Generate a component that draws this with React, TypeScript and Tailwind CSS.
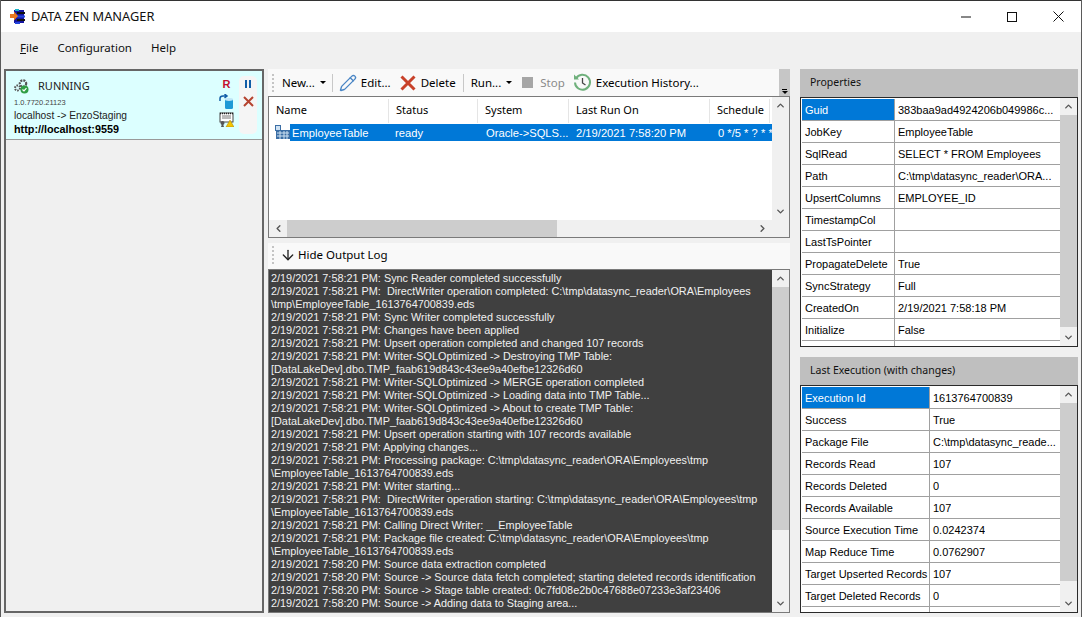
import { ArrowDown, ChevronDown, ChevronLeft, ChevronRight, ChevronUp, Pencil } from 'lucide-react';

const logLines = [
  '2/19/2021 7:58:21 PM: Sync Reader completed successfully',
  '2/19/2021 7:58:21 PM:  DirectWriter operation completed: C:\\tmp\\datasync_reader\\ORA\\Employees',
  '\\tmp\\EmployeeTable_1613764700839.eds',
  '2/19/2021 7:58:21 PM: Sync Writer completed successfully',
  '2/19/2021 7:58:21 PM: Changes have been applied',
  '2/19/2021 7:58:21 PM: Upsert operation completed and changed 107 records',
  '2/19/2021 7:58:21 PM: Writer-SQLOptimized -> Destroying TMP Table:',
  '[DataLakeDev].dbo.TMP_faab619d843c43ee9a40efbe12326d60',
  '2/19/2021 7:58:21 PM: Writer-SQLOptimized -> MERGE operation completed',
  '2/19/2021 7:58:21 PM: Writer-SQLOptimized -> Loading data into TMP Table...',
  '2/19/2021 7:58:21 PM: Writer-SQLOptimized -> About to create TMP Table:',
  '[DataLakeDev].dbo.TMP_faab619d843c43ee9a40efbe12326d60',
  '2/19/2021 7:58:21 PM: Upsert operation starting with 107 records available',
  '2/19/2021 7:58:21 PM: Applying changes...',
  '2/19/2021 7:58:21 PM: Processing package: C:\\tmp\\datasync_reader\\ORA\\Employees\\tmp',
  '\\EmployeeTable_1613764700839.eds',
  '2/19/2021 7:58:21 PM: Writer starting...',
  '2/19/2021 7:58:21 PM:  DirectWriter operation starting: C:\\tmp\\datasync_reader\\ORA\\Employees\\tmp',
  '\\EmployeeTable_1613764700839.eds',
  '2/19/2021 7:58:21 PM: Calling Direct Writer: __EmployeeTable',
  '2/19/2021 7:58:21 PM: Package file created: C:\\tmp\\datasync_reader\\ORA\\Employees\\tmp',
  '\\EmployeeTable_1613764700839.eds',
  '2/19/2021 7:58:20 PM: Source data extraction completed',
  '2/19/2021 7:58:20 PM: Source -> Source data fetch completed; starting deleted records identification',
  '2/19/2021 7:58:20 PM: Source -> Stage table created: 0c7fd08e2b0c47688e07233e3af23406',
  '2/19/2021 7:58:20 PM: Source -> Adding data to Staging area...',
];

const properties: [string, string][] = [
  ['Guid', '383baa9ad4924206b049986c...'],
  ['JobKey', 'EmployeeTable'],
  ['SqlRead', 'SELECT * FROM Employees'],
  ['Path', 'C:\\tmp\\datasync_reader\\ORA...'],
  ['UpsertColumns', 'EMPLOYEE_ID'],
  ['TimestampCol', ''],
  ['LastTsPointer', ''],
  ['PropagateDelete', 'True'],
  ['SyncStrategy', 'Full'],
  ['CreatedOn', '2/19/2021 7:58:18 PM'],
  ['Initialize', 'False'],
  ['', ''],
];

const execution: [string, string][] = [
  ['Execution Id', '1613764700839'],
  ['Success', 'True'],
  ['Package File', 'C:\\tmp\\datasync_reade...'],
  ['Records Read', '107'],
  ['Records Deleted', '0'],
  ['Records Available', '107'],
  ['Source Execution Time', '0.0242374'],
  ['Map Reduce Time', '0.0762907'],
  ['Target Upserted Records', '107'],
  ['Target Deleted Records', '0'],
  ['', ''],
];

const columns = [
  { label: 'Name', width: 'w-[120px]' },
  { label: 'Status', width: 'w-[89px]' },
  { label: 'System', width: 'w-[91px]' },
  { label: 'Last Run On', width: 'w-[141px]' },
  { label: 'Schedule', width: 'w-[60px]' },
];

function Grip() {
  return (
    <div className="flex h-[18px] w-[3px] shrink-0 flex-col justify-between">
      {[0, 1, 2, 3, 4].map((i) => (
        <div key={i} className="h-[2px] w-[2px] bg-[#c4c4c4]" />
      ))}
    </div>
  );
}

function Caret() {
  return <div className="ml-[5px] h-0 w-0 border-x-[3px] border-t-[3px] border-x-transparent border-t-black" />;
}

function Separator() {
  return <div className="h-[18px] w-px shrink-0 bg-[#c8c8c8]" />;
}

function PropertyGrid({ title, rows, keyWidth, thumbHeight }: { title: string; rows: [string, string][]; keyWidth: string; thumbHeight: string }) {
  return (
    <section className="flex h-full flex-col">
      <div className="flex h-[28px] shrink-0 items-center bg-[#bfbfbf] pb-px pl-[10px] font-['Noto_Sans',sans-serif] text-[10.5px] text-[#111]">{title}</div>
      <div className="flex min-h-0 flex-1 border border-[#2a2a2a] bg-[#f0f0f0]">
        <div className="min-w-0 flex-1 overflow-hidden bg-white pl-[1px] pt-[1px]">
          {rows.map(([key, value], i) => (
            <div key={i} className="flex h-[22px] border-b border-[#a0a0a0] text-[11px] leading-[21px]">
              <div className={`${keyWidth} shrink-0 overflow-hidden whitespace-nowrap border-r border-[#a0a0a0] pl-[3px] pt-px ${i === 0 ? 'bg-[#0078d7] text-white' : 'text-black'}`}>
                {key}
              </div>
              <div className="overflow-hidden whitespace-nowrap pl-[3px] pt-px text-black">{value}</div>
            </div>
          ))}
        </div>
        <div className="flex w-[17px] shrink-0 flex-col bg-[#f0f0f0]">
          <div className="flex h-[17px] shrink-0 items-center justify-center">
            <ChevronUp size={11} strokeWidth={3} className="text-[#555]" />
          </div>
          <div className={`${thumbHeight} bg-[#cdcdcd]`} />
          <div className="flex-1" />
          <div className="flex h-[17px] shrink-0 items-center justify-center">
            <ChevronDown size={11} strokeWidth={3} className="text-[#555]" />
          </div>
        </div>
      </div>
    </section>
  );
}

export default function App() {
  return (
    <div className="flex h-[617px] w-[1082px] flex-col overflow-hidden border-x border-[#5a5a5a] bg-[#f0f0f0] font-['Liberation_Sans',sans-serif] text-black">
      <header className="flex h-[32px] shrink-0 items-center border-t border-[#333] bg-white pl-[9px]">
        <svg width="16" height="15" viewBox="0 0 16 15" className="shrink-0">
          <rect x="4" y="1" width="10" height="13" fill="#1414a0" />
          <rect x="7" y="3" width="8" height="2" fill="#111" />
          <rect x="7" y="6.500" width="8" height="2" fill="#2244dd" />
          <rect x="7" y="10" width="8" height="2" fill="#111" />
          <path d="M0 5h4V2.500l4 4.500-4 4.500V9H0z" fill="#e8761e" />
          <rect x="5" y="0" width="4" height="2" fill="#19b5c9" />
          <rect x="5" y="13" width="5" height="2" fill="#2244dd" />
        </svg>
        <span className="ml-[5px] font-['Noto_Sans',sans-serif] text-[12.8px] text-[#111]">DATA ZEN MANAGER</span>
        <div className="ml-auto flex h-full">
          <div className="flex w-[46px] items-center justify-center">
            <svg width="10" height="10" viewBox="0 0 10 10"><path d="M0 5h10" stroke="#111" /></svg>
          </div>
          <div className="flex w-[46px] items-center justify-center">
            <svg width="10" height="10" viewBox="0 0 10 10"><rect x=".5" y=".5" width="9" height="9" fill="none" stroke="#111" /></svg>
          </div>
          <div className="flex w-[46px] items-center justify-center">
            <svg width="11" height="11" viewBox="0 0 11 11"><path d="M.5.500l10 10M10.500.500l-10 10" stroke="#111" /></svg>
          </div>
        </div>
      </header>

      <nav className="flex h-[32px] shrink-0 items-center gap-[19px] pl-[19px] font-['Noto_Sans',sans-serif] text-[11.5px] text-[#111]">
        <span><span className="underline">F</span>ile</span>
        <span>Configuration</span>
        <span>Help</span>
      </nav>

      <main className="flex min-h-0 flex-1 pb-[4px] pl-[3px] pr-[3px] pt-[5px]">
        <aside className="flex w-[260px] shrink-0 flex-col border-2 border-[#666]">
          <div className="flex h-[69px] shrink-0 border-b border-[#999] bg-[#dcffff] pl-[8px] pt-[5px]">
            <div className="w-[202px] shrink-0">
              <div className="flex h-[20px] items-center">
                <svg width="15" height="15" viewBox="0 0 15 15" className="shrink-0">
                  <circle cx="9" cy="4.500" r="3.200" fill="none" stroke="#555" strokeWidth="2.200" strokeDasharray="2 1" />
                  <circle cx="3.500" cy="9" r="2.500" fill="none" stroke="#555" strokeWidth="2" strokeDasharray="1.600 1" />
                  <circle cx="10.500" cy="10.500" r="4" fill="#2f9e44" />
                  <path d="M8.500 10.500l1.500 1.500 2.500-2.800" fill="none" stroke="#fff" strokeWidth="1.200" />
                </svg>
                <span className="ml-[9px] font-['Noto_Sans',sans-serif] text-[11px] text-[#222]">RUNNING</span>
              </div>
              <div className="mt-[1px] text-[7.5px] leading-[11px] text-[#444]">1.0.7720.21123</div>
              <div className="mt-[1px] text-[10.2px] leading-[14px] text-[#222]">localhost -&gt; EnzoStaging</div>
              <div className="text-[10.8px] font-bold leading-[13px] text-black">http://localhost:9559</div>
            </div>
            <div className="flex w-[21px] shrink-0 flex-col items-center gap-[1px]">
              <span className="h-[17px] text-[11px] font-bold leading-[17px] text-[#c40f2e]">R</span>
              <svg width="15" height="15" viewBox="0 0 15 15">
                <rect x="6" y="5" width="8" height="10" rx="1.500" fill="#1e9ad6" />
                <ellipse cx="10" cy="5.500" rx="4" ry="1.400" fill="#bfe6f7" />
                <path d="M1 7V4.500C1 3 2 2 4 2h3M5.500 0l2.500 2-2.500 2" fill="none" stroke="#125ea8" strokeWidth="1.500" />
              </svg>
              <svg width="15" height="15" viewBox="0 0 15 15" className="mt-[2px]">
                <rect x="1" y="1" width="13" height="9" fill="#fff" stroke="#444" />
                <path d="M1 1.500h13" stroke="#222" strokeWidth="1.500" strokeDasharray="1 1" />
                <path d="M3 4h9M3 6h9" stroke="#777" />
                <circle cx="3.500" cy="11" r="2" fill="#555" />
                <path d="M2 15l1-3h1l1 3z" fill="#555" />
                <path d="M11 8l4 7H7z" fill="#f5c400" stroke="#a07d00" strokeWidth=".5" />
              </svg>
            </div>
            <div className="ml-[2px] flex h-[58px] w-[18px] shrink-0 flex-col items-center rounded-[5px] bg-[#f5f5f5] pt-[4px]">
              <div className="flex h-[8px] gap-[2px]">
                <div className="w-[2px] bg-[#125ea8]" />
                <div className="w-[2px] bg-[#125ea8]" />
              </div>
              <svg width="11" height="11" viewBox="0 0 11 11" className="mt-[8px]">
                <path d="M1 1l9 9M10 1l-9 9" stroke="#b5432f" strokeWidth="2" />
              </svg>
            </div>
          </div>
          <div className="flex-1" />
        </aside>

        <div className="ml-[4px] flex w-[522px] shrink-0 flex-col">
          <div className="flex h-[27px] shrink-0">
            <div className="flex w-[511px] items-center bg-[#f9f9f9] pl-[4px] font-['Noto_Sans',sans-serif] text-[11.5px]">
              <Grip />
              <span className="ml-[7px]">New...</span>
              <Caret />
              <div className="ml-[6px]"><Separator /></div>
              <Pencil size={18} strokeWidth={1.8} className="ml-[6px] text-[#4a86c5]" />
              <span className="ml-[4px]">Edit...</span>
              <svg width="16" height="16" viewBox="0 0 16 16" className="ml-[9px]">
                <path d="M1.500 1.500l13 13M14.500 1.500l-13 13" stroke="#c8412a" strokeWidth="3" />
              </svg>
              <span className="ml-[5px]">Delete</span>
              <div className="ml-[7px]"><Separator /></div>
              <span className="ml-[7px]">Run...</span>
              <Caret />
              <div className="ml-[10px] h-[11px] w-[11px] bg-[#a6a6a6]" />
              <span className="ml-[7px] text-[#8a8a8a]">Stop</span>
              <svg width="19" height="19" viewBox="0 0 19 19" className="ml-[8px]">
                <path d="M3 5.500A7.500 7.500 0 1 1 2 9.500" fill="none" stroke="#6fb07c" strokeWidth="2" />
                <path d="M1 1.500v5h5z" fill="#6fb07c" />
                <path d="M9.500 5v5l3 2" fill="none" stroke="#444" strokeWidth="1.300" />
              </svg>
              <span className="ml-[4px]">Execution History...</span>
            </div>
            <div className="flex w-[11px] flex-col items-center justify-end bg-[#c6c6c6] pb-[2px]">
              <div className="h-px w-[5px] bg-black" />
              <div className="mt-[1px] h-0 w-0 border-x-[3px] border-t-[3px] border-x-transparent border-t-black" />
            </div>
          </div>

          <div className="flex h-[142px] shrink-0 flex-col border border-[#7a7a7a] bg-white">
            <div className="flex min-h-0 flex-1">
              <div className="min-w-0 flex-1 overflow-hidden">
                <div className="flex h-[27px] items-center font-['Noto_Sans',sans-serif] text-[11px]">
                  {columns.map((c) => (
                    <div key={c.label} className={`${c.width} flex h-[24px] shrink-0 items-center whitespace-nowrap border-r border-[#e5e5e5] pl-[7px]`}>
                      {c.label}
                    </div>
                  ))}
                </div>
                <div className="flex h-[17px] items-center text-[11.2px]">
                  <svg width="15" height="15" viewBox="0 0 15 15" className="ml-[6px] shrink-0">
                    <rect x=".5" y=".5" width="5" height="5" fill="#cfe2f3" stroke="#3b6ea5" />
                    <rect x="1" y="5" width="14" height="9" fill="#3b6ea5" />
                    <path d="M2 8h12M2 11h12M5 6v8M9 6v8M12 6v8" stroke="#cfe2f3" />
                  </svg>
                  <div className="flex h-full flex-1 items-center whitespace-nowrap bg-[#0078d7] pt-px text-white">
                    <span className="w-[99px] shrink-0 pl-[2px]">EmployeeTable</span>
                    <span className="w-[91px] shrink-0 pl-[6px]">ready</span>
                    <span className="w-[90px] shrink-0 pl-[6px]">Oracle-&gt;SQLS...</span>
                    <span className="w-[142px] shrink-0 pl-[6px]">2/19/2021 7:58:20 PM</span>
                    <span className="overflow-hidden pl-[6px]">0 */5 * ? * *</span>
                  </div>
                </div>
              </div>
              <div className="flex w-[17px] shrink-0 flex-col items-center bg-[#f0f0f0] pt-[3px]">
                <ChevronUp size={11} strokeWidth={3} className="text-[#555]" />
                <div className="flex-1" />
                <ChevronDown size={11} strokeWidth={3} className="mb-[3px] text-[#555]" />
              </div>
            </div>
            <div className="flex h-[17px] shrink-0 items-center bg-[#f0f0f0]">
              <div className="flex w-[18px] items-center justify-center"><ChevronLeft size={11} strokeWidth={3} className="text-[#555]" /></div>
              <div className="h-full w-[270px] bg-[#cdcdcd]" />
              <div className="flex-1" />
              <div className="mr-[18px] flex w-[17px] items-center justify-center"><ChevronRight size={11} strokeWidth={3} className="text-[#555]" /></div>
            </div>
          </div>

          <div className="mt-[5px] flex h-[26px] shrink-0 items-center bg-[#f9f9f9] pb-[2px] pl-[4px] font-['Noto_Sans',sans-serif] text-[11.5px]">
            <Grip />
            <ArrowDown size={16} strokeWidth={2} className="ml-[5px] text-[#222]" />
            <span className="ml-[2px]">Hide Output Log</span>
          </div>

          <div className="flex min-h-0 flex-1 border border-[#7a7a7a] bg-[#f0f0f0]">
            <div className="min-w-0 flex-1 overflow-hidden bg-[#404040] pl-[2px] pt-[2px] text-[10.87px] leading-[13px] text-[#f0f0f0]">
              {logLines.map((line, i) => (
                <div key={i} className="whitespace-pre">{line}</div>
              ))}
            </div>
            <div className="flex w-[17px] shrink-0 flex-col items-center">
              <ChevronUp size={11} strokeWidth={3} className="mt-[3px] text-[#555]" />
              <div className="mt-[3px] h-[243px] w-full bg-[#cdcdcd]" />
              <div className="flex-1" />
              <ChevronDown size={11} strokeWidth={3} className="mb-[3px] text-[#555]" />
            </div>
          </div>
        </div>

        <div className="ml-[10px] flex w-[278px] shrink-0 flex-col gap-[10px]">
          <div className="h-[278px] shrink-0">
            <PropertyGrid title="Properties" rows={properties} keyWidth="w-[93px]" thumbHeight="h-[212px]" />
          </div>
          <div className="min-h-0 flex-1">
            <PropertyGrid title="Last Execution (with changes)" rows={execution} keyWidth="w-[128px]" thumbHeight="h-[178px]" />
          </div>
        </div>
      </main>
    </div>
  );
}
